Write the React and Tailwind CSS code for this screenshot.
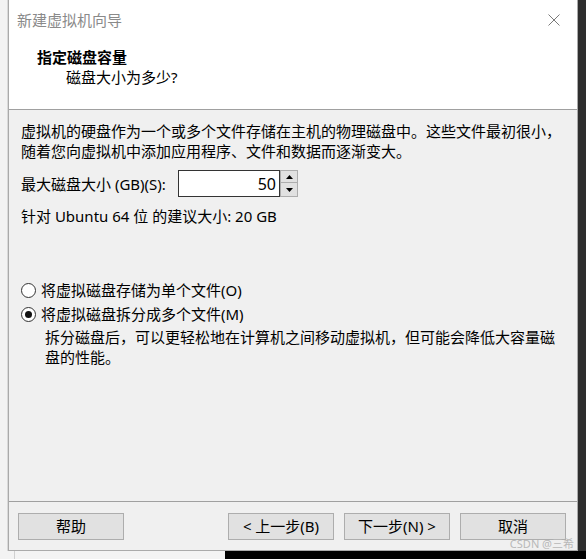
import React from 'react'

// ─── Wizard dialog: disk capacity step ───
const FONT = "font-['Segoe_UI','Noto_Sans','Noto_Sans_CJK_SC',sans-serif]"

function Radio({ checked, children }) {
  return (
    <div className="flex items-center h-[24px]">
      <span className="w-[15px] h-[15px] rounded-full border border-[#333] bg-white flex items-center justify-center">
        {checked && <span className="w-[7px] h-[7px] rounded-full bg-[#111]" />}
      </span>
      <span className="ml-[5px]">{children}</span>
    </div>
  )
}

function Button({ children, className = '' }) {
  return (
    <button className={`w-[106px] h-[27px] bg-[#e1e1e1] border border-[#adadad] text-[15px] text-black flex items-center justify-center ${className}`}>
      {children}
    </button>
  )
}

export default function App() {
  return (
    <div className={`relative w-[586px] h-[559px] flex flex-col bg-[#f3f3f3] overflow-hidden ${FONT}`}>
      <div className="flex h-[551px]">
        {/* franja izquierda */}
        <div className="w-[8px] border-r border-[#d9d9d9]" />

        {/* ventana */}
        <div className="w-[570px] flex flex-col bg-white border-x border-b border-[#aaaaaa]">
          {/* barra de título */}
          <div className="h-[40px] flex items-center justify-between pl-[8px] pr-[15px]">
            <span className="text-[15px] text-[#8a8a8a]">新建虚拟机向导</span>
            <svg width="12" height="12" viewBox="0 0 12 12" className="mr-[2px]">
              <path d="M0.5 0.5 L11.5 11.5 M11.5 0.5 L0.5 11.5" stroke="#7a7a7a" strokeWidth="1" />
            </svg>
          </div>

          {/* encabezado */}
          <div className="h-[70px] border-b border-[#a0a0a0] pl-[28px] pt-[7px]">
            <div className="text-[15px] font-bold text-black leading-[20px]">指定磁盘容量</div>
            <div className="pl-[29px] text-[15px] text-black leading-[20px]">磁盘大小为多少?</div>
          </div>

          {/* cuerpo */}
          <div className="h-[391px] bg-[#f0f0f0] pt-[11px] pl-[12px] text-[15px] leading-[20px] text-black flex flex-col">
            <p>虚拟机的硬盘作为一个或多个文件存储在主机的物理磁盘中。这些文件最初很小，</p>
            <p>随着您向虚拟机中添加应用程序、文件和数据而逐渐变大。</p>

            <div className="flex items-center mt-[9px] h-[27px]">
              <span className="w-[157px]">最大磁盘大小 (GB)(S):</span>
              <div className="w-[102px] h-[27px] bg-white border border-[#333] flex items-center justify-end pr-[3px] text-[16px]">50</div>
              <div className="flex flex-col w-[18px] h-[27px]">
                <div className="h-[13px] bg-[#e1e1e1] border border-[#adadad] flex items-center justify-center">
                  <svg width="7" height="4" viewBox="0 0 7 4"><path d="M3.5 0 L7 4 L0 4 Z" fill="#000" /></svg>
                </div>
                <div className="h-[14px] bg-[#e1e1e1] border border-t-0 border-[#adadad] flex items-center justify-center">
                  <svg width="7" height="4" viewBox="0 0 7 4"><path d="M0 0 L7 0 L3.5 4 Z" fill="#000" /></svg>
                </div>
              </div>
            </div>

            <p className="mt-[9px]">针对 Ubuntu 64 位 的建议大小: 20 GB</p>

            <div className="mt-[52px]">
              <Radio>将虚拟磁盘存储为单个文件(O)</Radio>
              <Radio checked>将虚拟磁盘拆分成多个文件(M)</Radio>
            </div>
            <div className="pl-[24px] mt-[1px]">
              <p>拆分磁盘后，可以更轻松地在计算机之间移动虚拟机，但可能会降低大容量磁</p>
              <p>盘的性能。</p>
            </div>
          </div>

          {/* pie con botones */}
          <div className="flex-1 bg-[#f0f0f0] border-t border-[#a0a0a0] flex items-start pt-[11px] pl-[9px] pr-[11px]">
            <Button>帮助</Button>
            <div className="flex-1" />
            <Button>&lt; 上一步(B)</Button>
            <Button className="ml-[10px]">下一步(N) &gt;</Button>
            <Button className="ml-[10px]">取消</Button>
          </div>
        </div>

        {/* franja derecha */}
        <div className="flex-1 bg-[#2e2e2e]" />
      </div>

      {/* zona inferior */}
      <div className="flex-1 flex">
        <div className="w-[225px] bg-[#f3f3f3] pl-[14px]">
          <div className="h-full border-l border-[#d0d0d0]" />
        </div>
        <div className="flex-1 bg-black" />
      </div>

      {/* marca de agua */}
      <span className="absolute right-[12px] bottom-[8px] text-[11px] leading-[14px] text-[#b8b8b8]">CSDN @三希</span>
    </div>
  )
}
